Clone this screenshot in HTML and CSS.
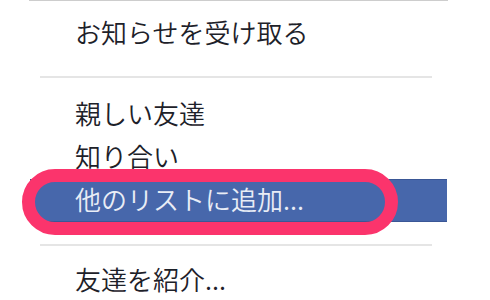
FILE: index.html
```html
<!DOCTYPE html>
<html lang="ja">
<head>
<meta charset="utf-8">
<link rel="stylesheet" href="styles.css">
</head>
<body>
<div class="menu">
  <div class="item">お知らせを受け取る</div>
  <div class="sep sep-a"></div>
  <div class="item">親しい友達</div>
  <div class="item">知り合い</div>
  <div class="item item-active">他のリストに追加...<span class="ring"></span></div>
  <div class="sep sep-b"></div>
  <div class="item">友達を紹介...</div>
</div>
</body>
</html>
```

FILE: styles.css
```css
html, body {
  margin: 0;
  padding: 0;
  background: #ffffff;
}
body {
  width: 490px;
  height: 300px;
  overflow: hidden;
  font-family: "Noto Sans CJK JP", "Noto Sans", sans-serif;
}
.menu {
  margin-left: 29px;
  width: 419px;
  border-top: 1px solid #cdcdcd;
  padding-top: 11px;
  display: flex;
  flex-direction: column;
}
.item {
  position: relative;
  height: 43px;
  box-sizing: border-box;
  display: flex;
  align-items: center;
  padding-left: 46px;
  padding-bottom: 3px;
  font-size: 26px;
  font-weight: 350;
  line-height: 1;
  color: #1d2129;
  white-space: nowrap;
}
.item-active {
  background: #4767ab;
  border-top: 1px solid #3a5796;
  border-bottom: 1px solid #3a5796;
  margin-right: 1px;
  margin-left: 1px;
  padding-left: 45px;
  color: #e9edf6;
}
.ring {
  position: absolute;
  left: -8px;
  top: -11px;
  width: 376px;
  height: 66px;
  box-sizing: border-box;
  border: 13px solid #fb346c;
  border-radius: 33px;
}
.sep {
  height: 2px;
  background: #e5e5e5;
  margin-left: 11px;
  margin-right: 16px;
}
.sep-a {
  margin-top: 21px;
  margin-bottom: 15px;
}
.sep-b {
  margin-top: 22px;
  margin-bottom: 13px;
}
```
